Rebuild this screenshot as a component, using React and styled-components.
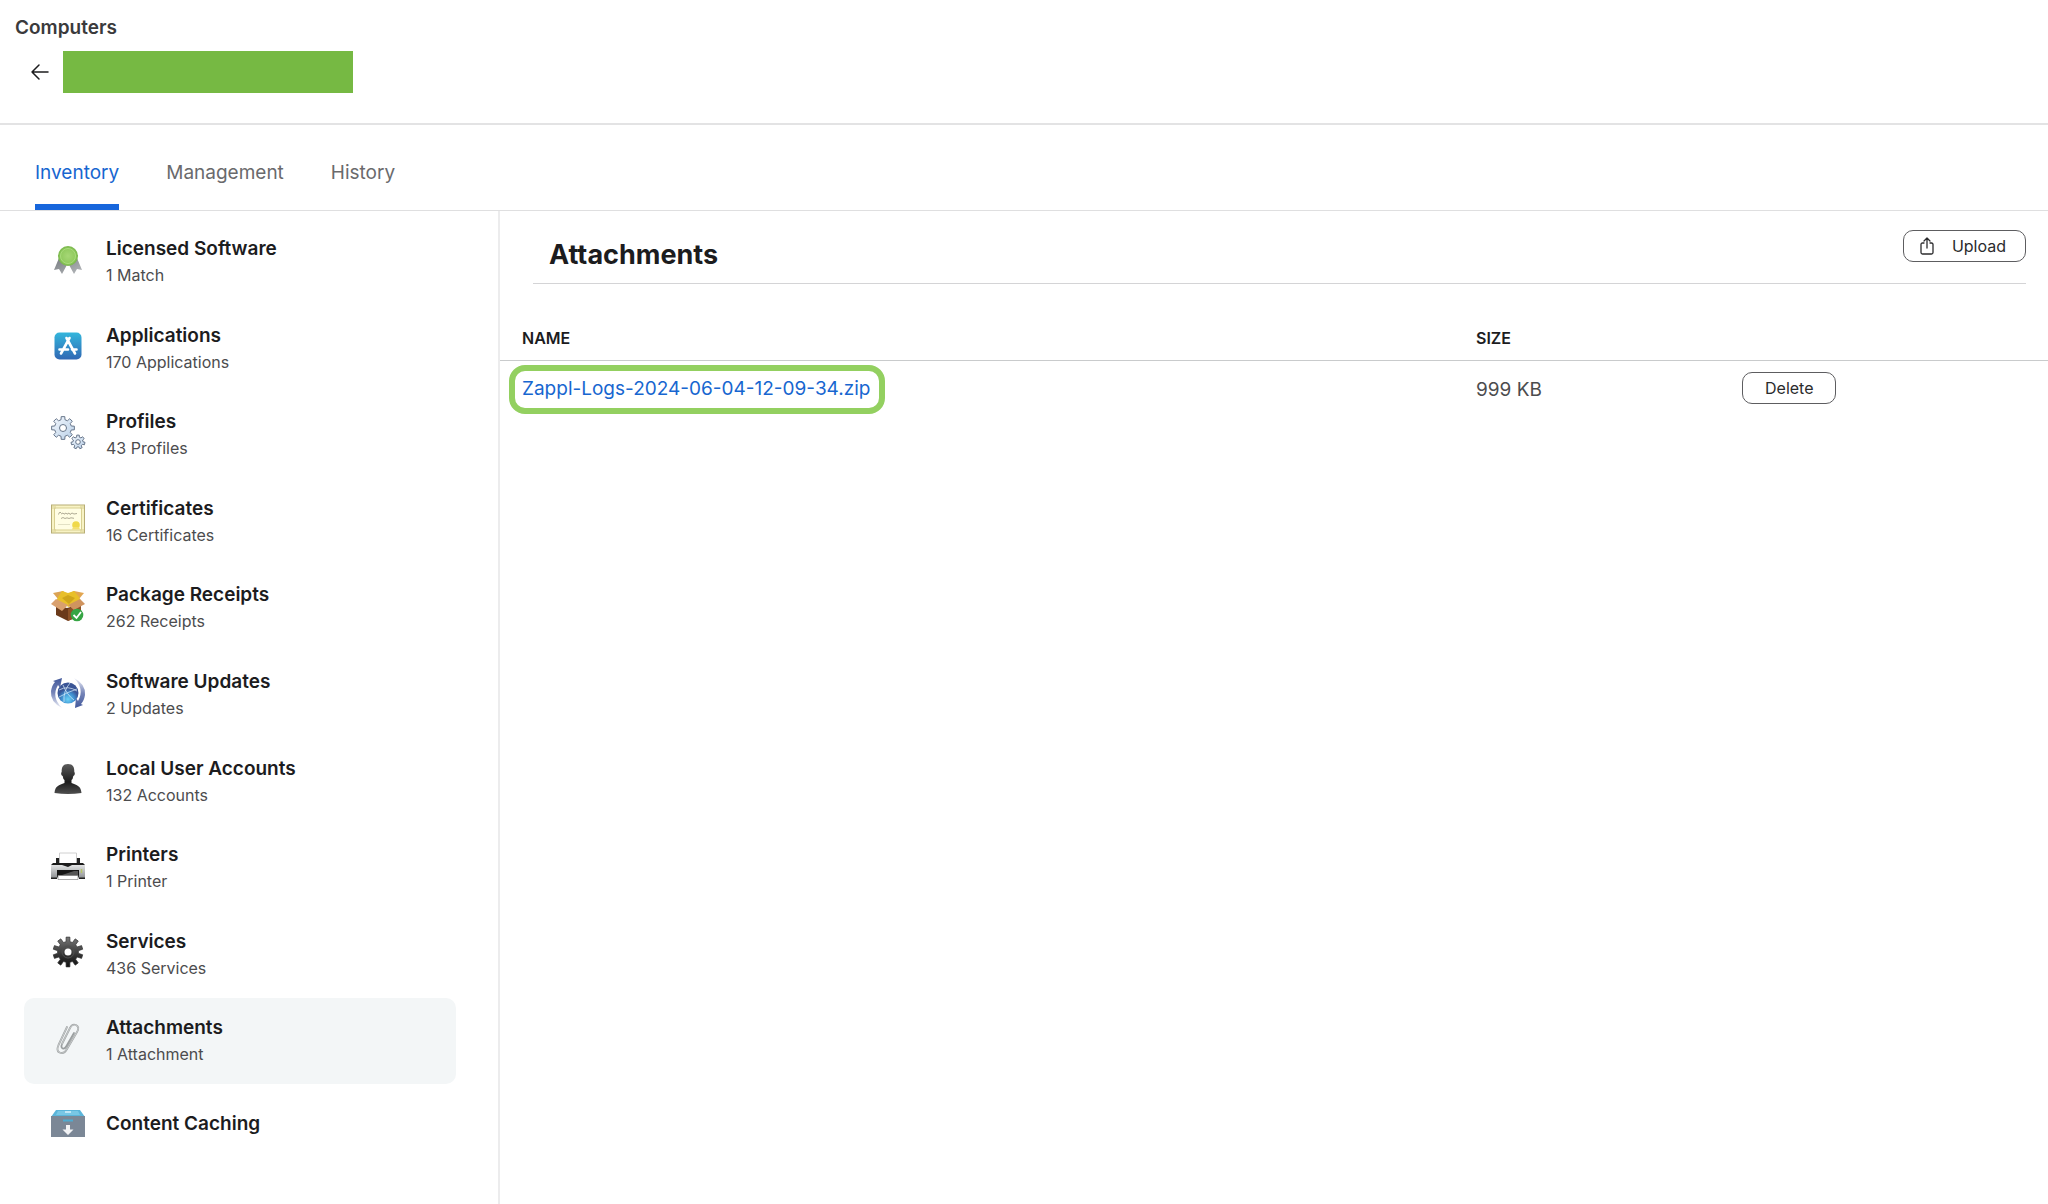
import React from "react";
import styled, { createGlobalStyle } from "styled-components";

const GlobalStyle = createGlobalStyle`
  * { box-sizing: border-box; }
  body { margin: 0; background: #fff; font-family: Inter, "Liberation Sans", sans-serif; }
  button { font-family: inherit; }
`;

const Page = styled.div`
  display: flex;
  flex-direction: column;
  min-height: 100vh;
  color: #1c1c1e;
`;

const Header = styled.header`
  padding: 16px 15px 30px;
  border-bottom: 2px solid #e3e3e4;
`;

const Section = styled.div`
  font-size: 19px;
  line-height: 24px;
  font-weight: 600;
  color: #3a3a3c;
`;

const TitleRow = styled.div`
  display: flex;
  align-items: center;
  gap: 12px;
  margin-top: 11px;
  padding-left: 12px;
`;

const BackButton = styled.button`
  display: flex;
  padding: 0;
  border: 0;
  background: none;
  cursor: pointer;
`;

const ComputerName = styled.div`
  width: 290px;
  height: 42px;
  background: #76b943;
`;

const Tabs = styled.nav`
  display: flex;
  gap: 47px;
  padding: 0 35px;
  border-bottom: 1px solid #dfdfe0;
`;

const Tab = styled.a`
  padding: 35px 0 18px;
  border-bottom: 6px solid ${(p) => (p.$active ? "#1766dc" : "transparent")};
  color: ${(p) => (p.$active ? "#1766d0" : "#6a6a6c")};
  font-size: 19px;
  line-height: 26px;
  text-decoration: none;
`;

const Body = styled.div`
  display: flex;
  flex: 1;
`;

const Sidebar = styled.nav`
  display: flex;
  width: 500px;
  flex-shrink: 0;
  padding: 8px 42px 33px 24px;
  border-right: 2px solid #ececed;
`;

const List = styled.ul`
  display: flex;
  flex-direction: column;
  flex: 1;
  margin: 0;
  padding: 0;
  list-style: none;
`;

const Item = styled.li`
  display: flex;
  flex: 1;
`;

const ItemLink = styled.a`
  display: flex;
  flex: 1;
  align-items: center;
  gap: 20px;
  padding: ${(p) => (p.$single ? "12px 26px 20px" : "12px 26px")};
  border-radius: 10px;
  background: ${(p) => (p.$active ? "#f3f6f7" : "transparent")};
  color: inherit;
  text-decoration: none;
`;

const ItemIcon = styled.svg`
  width: 36px;
  height: 36px;
  flex-shrink: 0;
  margin-bottom: ${(p) => (p.$single ? "0" : "5px")};
`;

const ItemTitle = styled.div`
  font-size: 19px;
  line-height: 26px;
  font-weight: 600;
`;

const ItemCount = styled.div`
  font-size: 16px;
  line-height: 26px;
  color: #4c4c4e;
`;

const Main = styled.main`
  flex: 1;
  min-width: 0;
`;

const MainHeader = styled.div`
  display: flex;
  align-items: flex-start;
  justify-content: space-between;
  margin: 19px 22px 0 33px;
  padding: 0 0 10px 16px;
  border-bottom: 1px solid #d4d4d6;
`;

const Heading = styled.h1`
  margin: 7px 0 0;
  font-size: 27px;
  line-height: 36px;
  font-weight: 700;
`;

const OutlineButton = styled.button`
  display: inline-flex;
  align-items: center;
  gap: 18px;
  height: 32px;
  padding: ${(p) => (p.$withIcon ? "0 19px 0 16px" : "0 22px")};
  border: 1px solid #5d5d60;
  border-radius: 10px;
  background: #fff;
  color: #2b2b2d;
  font-size: 16px;
  line-height: 24px;
  vertical-align: top;
  cursor: pointer;
`;

const Table = styled.table`
  width: 100%;
  margin-top: 36px;
  border-collapse: collapse;
  table-layout: fixed;
  text-align: left;
`;

const Th = styled.th`
  width: ${(p) => p.$width || "auto"};
  padding: 6px 22px 10px;
  border-bottom: 1px solid #c9cbcc;
  font-size: 16px;
  line-height: 24px;
  font-weight: 600;
`;

const Td = styled.td`
  padding: ${(p) => (p.$action ? "4px 0 8px" : "4px 22px")};
  color: #4c4c4e;
  font-size: 19px;
  line-height: 26px;
`;

const Highlight = styled.span`
  display: inline-block;
  margin-left: -13px;
  padding: 5px 9px 6px 7px;
  border: 6px solid #93d060;
  border-radius: 16px;
  vertical-align: top;
`;

const FileLink = styled.a`
  color: #1766d0;
  text-decoration: none;
`;

const gear = (cx, cy, outer, inner, teeth) => {
  const pts = [];
  const step = (Math.PI * 2) / teeth;
  for (let i = 0; i < teeth; i++) {
    const a = i * step - Math.PI / 2;
    [[-0.3, inner], [-0.2, outer], [0.2, outer], [0.3, inner]].forEach(([k, r]) => {
      pts.push(`${(cx + r * Math.cos(a + k * step)).toFixed(2)} ${(cy + r * Math.sin(a + k * step)).toFixed(2)}`);
    });
  }
  return `M${pts.join("L")}Z`;
};

const icons = {
  license: (
    <>
      <defs>
        <linearGradient id="ribbon" x2="1" y2="1"><stop stopColor="#777b80" /><stop offset="1" stopColor="#b7babd" /></linearGradient>
        <radialGradient id="medal"><stop stopColor="#a6d776" /><stop offset=".7" stopColor="#92cb60" /><stop offset="1" stopColor="#78b64a" /></radialGradient>
      </defs>
      <path d="M9 16L4 28L9 27L12 32L18 21L24 32L27 27L32 28L27 16Z" fill="url(#ribbon)" />
      <circle cx="18" cy="14" r="10" fill="url(#medal)" />
      <circle cx="18" cy="14" r="7.500" fill="none" stroke="#a9dc7c" />
    </>
  ),
  apps: (
    <>
      <defs><linearGradient id="store" x2="0" y2="1"><stop stopColor="#34b6dc" /><stop offset="1" stopColor="#3068b4" /></linearGradient></defs>
      <rect x="4.500" y="4.500" width="27" height="27" rx="5" fill="url(#store)" />
      <g stroke="#fff" strokeWidth="2.600" strokeLinecap="round">
        <path d="M19.500 10L11 25.500M16.500 10L25 25.500M9.500 21.500H18M22 21.500H26.500" />
      </g>
    </>
  ),
  profiles: (
    <>
      <defs><linearGradient id="pale" x2="1" y2="1"><stop stopColor="#f4f8fd" /><stop offset="1" stopColor="#b9d0e8" /></linearGradient></defs>
      <g fill="url(#pale)" stroke="#66758a" strokeLinejoin="round">
        <path d={gear(13, 13, 11.5, 8.5, 8)} />
        <path d={gear(28, 27, 7, 5, 7)} />
        <circle cx="13" cy="13" r="3.500" fill="#fff" />
        <circle cx="28" cy="27" r="2.300" fill="#fff" />
      </g>
    </>
  ),
  certificate: (
    <>
      <rect x="1.500" y="4" width="33" height="28" fill="#f8f3c4" stroke="#b7ad75" />
      <rect x="4.500" y="7" width="27" height="22" fill="#fffde3" stroke="#d8cf91" />
      <g fill="#d8cf91"><path d="M2 4H6V8H2zM30 4H34V8H30zM2 28H6V32H2zM30 28H34V32H30z" opacity=".5" /></g>
      <path d="M8.500 13.500Q9 10.500 11 11.500M11 13L13 12L14 13.200L16 12L17 13.200L19 12L20 13.500L22 12L24 13L27 12.500M11 17.500L13 16.500L15 17.500L17 16.800L19 17.500L21 16.800L24 17.300" fill="none" stroke="#9a9680" strokeWidth=".8" />
      <path d="M8 23.500H20" stroke="#e2e0c4" />
      <circle cx="26" cy="24" r="3.800" fill="#f0d94b" />
      <path d="M23 26L22 28.500H30L29 26Z" fill="#f3e070" />
    </>
  ),
  packages: (
    <>
      <path d="M6 17L17 20L31 16V27L18 33L6 27Z" fill="#6b3a1b" />
      <path d="M18 21L31 16V27L18 33Z" fill="#8c5127" />
      <path d="M3 5L13 3L16 5L8 11Z" fill="#dba355" />
      <path d="M34 5L24 3L20 5L29 11Z" fill="#e2a651" />
      <path d="M8 9L12 3L18 5L24 3L29 9L31 13L19 19L6 14Z" fill="#e8bf2a" />
      <path d="M12 10L18 7L25 10L19 16Z" fill="#cfa51c" />
      <path d="M6 11L18 17L12 23L1 16Z" fill="#d9a06e" />
      <path d="M30 11L35 16L24 22L18 17Z" fill="#d0945f" />
      <circle cx="27" cy="27" r="6.300" fill="#36a544" />
      <path d="M23.500 27L26.500 30L31 24" fill="none" stroke="#fff" strokeWidth="1.800" />
    </>
  ),
  updates: (
    <>
      <defs>
        <radialGradient id="globe" cy=".8"><stop stopColor="#6ad2f5" /><stop offset=".6" stopColor="#3f8fd0" /><stop offset="1" stopColor="#3a5596" /></radialGradient>
        <linearGradient id="arcA" x2="0" y2="1"><stop stopColor="#43599b" /><stop offset=".5" stopColor="#7685b8" /><stop offset="1" stopColor="#eef0f8" /></linearGradient>
        <linearGradient id="arcB" x2="0" y2="1"><stop stopColor="#eef0f8" /><stop offset=".5" stopColor="#7685b8" /><stop offset="1" stopColor="#43599b" /></linearGradient>
      </defs>
      <circle cx="18" cy="18" r="10.500" fill="url(#globe)" />
      <path d="M9 15Q18 10 27 16M9 22Q18 17 27 14M13 10Q17 20 24 25M20 8Q13 16 14 27" fill="none" stroke="#dbeffb" strokeWidth=".7" />
      <path d="M12 33Q0 27 1 16Q2 10 5 7L3 6L12 3L10 13L8 10Q1 22 12 33Z" fill="url(#arcA)" />
      <path d="M24 3Q36 9 35 20Q34 26 31 29L33 30L25 33L26 23L28 26Q35 14 24 3Z" fill="url(#arcB)" />
    </>
  ),
  users: (
    <>
      <defs><linearGradient id="bust" x2="0" y2="1"><stop stopColor="#5c5c5c" /><stop offset=".6" stopColor="#1c1c1c" /><stop offset="1" stopColor="#4f4f4f" /></linearGradient></defs>
      <path d="M18 3C23 3 24.500 6 24.300 11C25.500 12 24.500 15 23.300 15Q23 18 21.500 19V22C27 24 31 25 31.500 32Q18 34 4.500 32C5 25 9 24 14.500 22V19Q13 18 12.700 15C11.500 15 10.500 12 11.700 11C11.500 6 13 3 18 3Z" fill="url(#bust)" />
    </>
  ),
  printer: (
    <>
      <defs><linearGradient id="print" x2="0" y2="1"><stop stopColor="#e3e4e5" /><stop offset="1" stopColor="#8d9092" /></linearGradient></defs>
      <path d="M6 10H10V17H6zM26 10H30V17H26z" fill="#222" />
      <path d="M9.500 5H26.500V16H9.500Z" fill="#fff" stroke="#c4c4c4" strokeWidth=".8" />
      <path d="M1 17H35V30H1Z" fill="url(#print)" />
      <path d="M3 15H33L35 17H22L18 19L12 17H1Z" fill="#1b1b1b" />
      <path d="M7 22H29V29H7Z" fill="#151515" />
      <path d="M12 27L24 23H28V27Z" fill="#555" />
      <path d="M8 27.500H28V31.500H8Z" fill="#fff" stroke="#888" strokeWidth=".7" />
      <path d="M1 29.500H7V31H1zM29 29.500H35V31H29z" fill="#222" />
      <path d="M31.500 21V25" stroke="#b4c46a" strokeWidth="1.500" />
    </>
  ),
  services: (
    <>
      <defs><linearGradient id="dark" x2="0" y2="1"><stop stopColor="#777" /><stop offset=".7" stopColor="#2a2a2a" /><stop offset="1" stopColor="#111" /></linearGradient></defs>
      <path d={gear(18, 18, 15, 10.5, 10)} fill="url(#dark)" stroke="#333" strokeWidth=".7" />
      <circle cx="18" cy="18" r="6" fill="none" stroke="#4f4f4f" />
      <circle cx="18" cy="18" r="3.500" fill="#fff" />
    </>
  ),
  attachment: (
    <g fill="none" strokeLinecap="round" strokeLinejoin="round">
      <path d="M17 6L8.500 24Q6 30 9.500 31.500Q14 33.500 17 28L27 11Q30 6 26 4Q22 2.500 20 7L12 23Q10.500 27 13 27.500Q15 28 16.500 25L24 12" stroke="#9b9fa0" strokeWidth="1.800" />
      <path d="M17 6L8.500 24Q6 30 9.500 31.500Q14 33.500 17 28L27 11Q30 6 26 4Q22 2.500 20 7L12 23" stroke="#dadddd" strokeWidth=".7" />
    </g>
  ),
  caching: (
    <>
      <path d="M6 4H30L35 11H1Z" fill="#5bb5da" />
      <path d="M8 5H28L30 9H6Z" fill="#79c7e5" />
      <path d="M15 6H21" stroke="#d9f1fb" strokeWidth="1.500" />
      <path d="M1 10H35V31H1Z" fill="#7b8796" />
      <path d="M13 14.500H23" stroke="#4fabd0" strokeWidth="2" />
      <path d="M16 19H20V23.500H23.500L18 29L12.500 23.500H16Z" fill="#f2f3f5" />
    </>
  ),
};

const items = [
  ["license", "Licensed Software", "1 Match"],
  ["apps", "Applications", "170 Applications"],
  ["profiles", "Profiles", "43 Profiles"],
  ["certificate", "Certificates", "16 Certificates"],
  ["packages", "Package Receipts", "262 Receipts"],
  ["updates", "Software Updates", "2 Updates"],
  ["users", "Local User Accounts", "132 Accounts"],
  ["printer", "Printers", "1 Printer"],
  ["services", "Services", "436 Services"],
  ["attachment", "Attachments", "1 Attachment"],
  ["caching", "Content Caching", null],
];

export default function App() {
  return (
    <Page>
      <GlobalStyle />
      <Header>
        <Section>Computers</Section>
        <TitleRow>
          <BackButton aria-label="Back">
            <svg width="24" height="24" viewBox="0 0 24 24" fill="none" stroke="#1c1c1e" strokeWidth="1.500" strokeLinecap="round" strokeLinejoin="round">
              <path d="M21 12H5M12 5L5 12L12 19" />
            </svg>
          </BackButton>
          <ComputerName />
        </TitleRow>
      </Header>
      <Tabs>
        <Tab href="#inventory" $active aria-current="page">Inventory</Tab>
        <Tab href="#management">Management</Tab>
        <Tab href="#history">History</Tab>
      </Tabs>
      <Body>
        <Sidebar>
          <List>
            {items.map(([icon, title, count]) => (
              <Item key={icon}>
                <ItemLink href={`#${icon}`} $active={icon === "attachment"} $single={!count}>
                  <ItemIcon viewBox="0 0 36 36" aria-hidden="true" $single={!count}>{icons[icon]}</ItemIcon>
                  <div>
                    <ItemTitle>{title}</ItemTitle>
                    {count && <ItemCount>{count}</ItemCount>}
                  </div>
                </ItemLink>
              </Item>
            ))}
          </List>
        </Sidebar>
        <Main>
          <MainHeader>
            <Heading>Attachments</Heading>
            <OutlineButton $withIcon>
              <svg width="14" height="18" viewBox="0 0 14 18" fill="none" stroke="#2b2b2d" strokeWidth="1.300" strokeLinecap="round" strokeLinejoin="round" aria-hidden="true">
                <path d="M4 6H2.500Q1 6 1 7.500V15.500Q1 17 2.500 17H11.500Q13 17 13 15.500V7.500Q13 6 11.500 6H10M7 11V1M4 4L7 1L10 4" />
              </svg>
              Upload
            </OutlineButton>
          </MainHeader>
          <Table>
            <thead>
              <tr>
                <Th>NAME</Th>
                <Th $width="288px">SIZE</Th>
                <Th $width="306px" aria-label="Actions" />
              </tr>
            </thead>
            <tbody>
              <tr>
                <Td>
                  <Highlight><FileLink href="#file">Zappl-Logs-2024-06-04-12-09-34.zip</FileLink></Highlight>
                </Td>
                <Td>999 KB</Td>
                <Td $action><OutlineButton>Delete</OutlineButton></Td>
              </tr>
            </tbody>
          </Table>
        </Main>
      </Body>
    </Page>
  );
}
